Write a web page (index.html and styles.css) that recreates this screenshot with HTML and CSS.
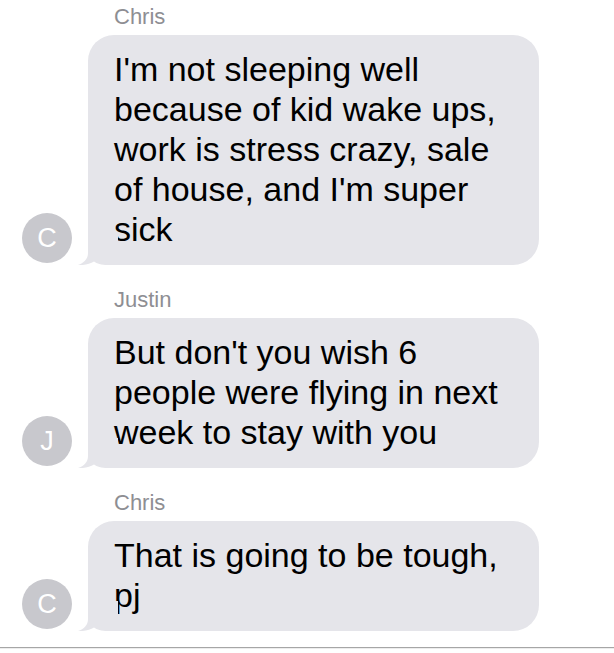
FILE: index.html
```html
<!DOCTYPE html>
<html>
<head>
<meta charset="utf-8">
<link rel="stylesheet" href="styles.css">
</head>
<body>
<div class="thread">
  <div class="group">
    <div class="name">Chris</div>
    <div class="row">
      <div class="avatar">C</div>
      <div class="bubble">I'm not sleeping well because of kid wake ups, work is stress crazy, sale of house, and I'm super sick<svg class="tail" viewBox="0 0 40 30" width="40" height="30"><path d="M10 0 L10 18 C10 24 6 28 0 30 C6 30.5 12 29 16 26.5 C19 28.5 23 30 30 30 L40 30 L40 0 Z"/></svg></div>
    </div>
  </div>
  <div class="group">
    <div class="name">Justin</div>
    <div class="row">
      <div class="avatar">J</div>
      <div class="bubble">But don't you wish 6 people were flying in next week to stay with you<svg class="tail" viewBox="0 0 40 30" width="40" height="30"><path d="M10 0 L10 18 C10 24 6 28 0 30 C6 30.5 12 29 16 26.5 C19 28.5 23 30 30 30 L40 30 L40 0 Z"/></svg></div>
    </div>
  </div>
  <div class="group">
    <div class="name">Chris</div>
    <div class="row">
      <div class="avatar">C</div>
      <div class="bubble">That is going to be tough, pj<svg class="tail" viewBox="0 0 40 30" width="40" height="30"><path d="M10 0 L10 18 C10 24 6 28 0 30 C6 30.5 12 29 16 26.5 C19 28.5 23 30 30 30 L40 30 L40 0 Z"/></svg></div>
    </div>
  </div>
  <div class="divider"></div>
</div>
</body>
</html>
```
FILE: styles.css
```css
html, body {
  margin: 0;
  padding: 0;
  background: #ffffff;
}
body {
  font-family: "Liberation Sans", Arial, sans-serif;
  width: 614px;
  height: 653px;
  overflow: hidden;
}
.thread {
  display: flex;
  flex-direction: column;
  gap: 22px;
  padding-top: 4px;
}
.group {
  display: flex;
  flex-direction: column;
}
.name {
  font-size: 22px;
  line-height: 26px;
  color: #8e8e93;
  padding-left: 114px;
  margin-bottom: 5px;
}
.row {
  display: flex;
  align-items: flex-end;
}
.avatar {
  width: 50px;
  height: 50px;
  border-radius: 50%;
  background: #c8c8cd;
  color: #ffffff;
  font-size: 27px;
  display: flex;
  align-items: center;
  justify-content: center;
  margin-left: 22px;
  margin-bottom: 2px;
  flex: none;
}
.bubble {
  position: relative;
  width: 451px;
  box-sizing: border-box;
  margin-left: 16px;
  padding: 14px 20px 16px 26px;
  background: #e5e5ea;
  border-radius: 26px;
  font-size: 34px;
  line-height: 40px;
  color: #000000;
}
.tail {
  position: absolute;
  left: -10px;
  bottom: 0;
  fill: #e5e5ea;
  display: block;
}
.divider {
  margin-top: -6px;
  height: 1px;
  background: #a6a6a6;
  border-bottom: 1px solid #ededed;
}
```
